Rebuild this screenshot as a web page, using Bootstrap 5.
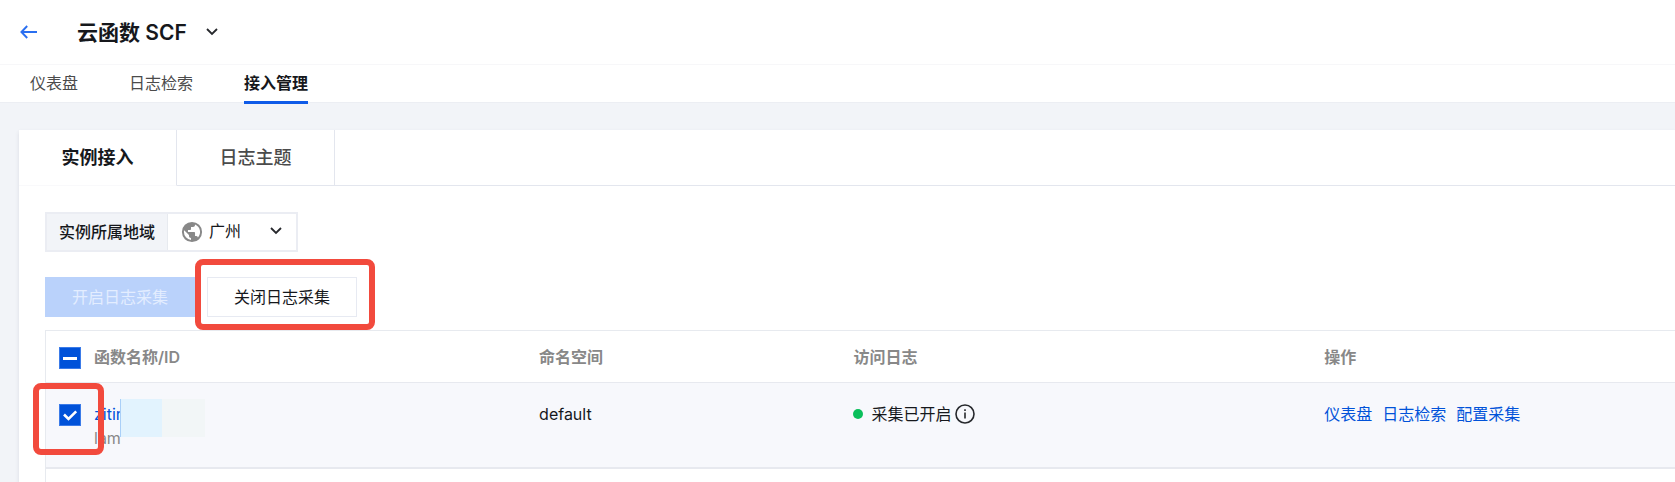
<!DOCTYPE html>
<html lang="zh-CN">
<head>
<meta charset="utf-8">
<meta name="viewport" content="width=device-width, initial-scale=1">
<title>云函数 SCF</title>
<link href="https://cdn.jsdelivr.net/npm/bootstrap@5.3.0/dist/css/bootstrap.min.css" rel="stylesheet">
<style>
  body { font-family: Inter, "Noto Sans CJK SC", sans-serif; font-size: 16px; line-height: 24px; color: #16181c; background: #f2f4f8; }
  a { color: #0052d9; text-decoration: none; }
  .topbar { height: 64px; padding-left: 20px; }
  .topbar h1 { font-size: 21px; line-height: 28px; font-weight: 600; padding-top: 2px; }
  .back-link { width: 57px; line-height: 1; }
  .back-link svg { display: block; }
  .page-tabs { height: 39px; padding-left: 30px; gap: 51px; border-top: 1px solid #f7f7f9; border-bottom: 1px solid #eceef3; }
  .page-tabs a { color: #4b4b4b; height: 39px; line-height: 36px; border-bottom: 3px solid transparent; }
  .page-tabs a.active { color: #16181c; font-weight: 600; border-color: #0f5be8; }
  .main-pane { margin: 27px 0 0 19px; box-shadow: 0 2px 4px rgba(54, 58, 80, .12); }
  .pane-tabs { height: 56px; }
  .pane-tabs a { width: 158px; font-size: 18px; font-weight: 500; color: #4b4b4b; border-right: 1px solid #e3e6ee; border-bottom: 1px solid #e3e6ee; }
  .pane-tabs a.active { color: #16181c; font-weight: 600; border-bottom-color: #f9f9fb; }
  .pane-tabs .rest { border-bottom: 1px solid #e3e6ee; }
  .pane-body { padding: 26px 0 0 26px; }
  .region { height: 40px; border: 2px solid #ebedf3; width: 253px; margin-bottom: 25px; }
  .region label { width: 122px; background: #f2f4f8; border-right: 1px solid #e7eaef; font-weight: 500; }
  .region select { appearance: none; border: 0; background: transparent; color: #16181c; width: 128px; padding: 0 0 2px 41px; }
  .region .globe { left: 13px; top: 7px; pointer-events: none; }
  .region .chev { right: 13px; top: 12px; pointer-events: none; }
  .actions .btn { --bs-btn-border-radius: 0; --bs-btn-padding-x: 0; width: 150px; height: 40px; font-size: 16px; line-height: 24px; }
  .btn-start { --bs-btn-disabled-bg: #bad2fb; --bs-btn-disabled-border-color: #bad2fb; --bs-btn-disabled-color: #e3edff; --bs-btn-disabled-opacity: 1; }
  .btn-stop { --bs-btn-border-color: #e7eaf2; --bs-btn-color: #16181c; --bs-btn-border-width: 1px; background: #fff; }
  .callout { border: 6px solid #f24a3d; border-radius: 8px; pointer-events: none; z-index: 2; }
  .callout-btn { inset: -18px -18px -13px -8px; }
  .callout-check { width: 71px; height: 72px; left: -13px; top: 0; }
  .table-wrap { margin-top: 13px; border-left: 1px solid #e7eaef; border-top: 1px solid #e7eaef; }
  .fn-table { table-layout: fixed; --bs-table-bg: transparent; }
  .fn-table > :not(caption) > * > * { padding: 13px 15px; border-bottom: 1px solid #e7e9ef; color: #16181c; }
  .fn-table > thead > tr > th { color: #888; font-weight: 600; height: 51px; }
  .fn-table > tbody > tr > td { background: #f7f8fc; padding-top: 19px; height: 86px; border-bottom-width: 2px; }
  .fn-table > * > tr > .tick { padding-left: 13px; padding-right: 0; }
  .fn-table > * > tr > .tick + * { padding-left: 13px; }
  .fn-table .form-check-input { width: 22px; height: 22px; margin: 1px 0 0; border-radius: 0; background-size: 20px; display: block; }
  .fn-table .form-check-input:checked, .fn-table .form-check-input:indeterminate { background-color: #0052d9; border-color: #3b7be8; }
  .fn-table .form-check-input:checked { margin-top: 2px; background-image: url("data:image/svg+xml,%3csvg xmlns='http://www.w3.org/2000/svg' viewBox='0 0 20 20'%3e%3cpath fill='none' stroke='%23fff' stroke-width='2.6' d='M4 9.500l4.500 4.500L16.200 6.400'/%3e%3c/svg%3e"); }
  .fn-table .form-check-input:indeterminate { background-image: url("data:image/svg+xml,%3csvg xmlns='http://www.w3.org/2000/svg' viewBox='0 0 20 20'%3e%3cpath fill='none' stroke='%23fff' stroke-width='3' d='M3 10.500h14'/%3e%3c/svg%3e"); }
  .masked { left: 39px; top: 16px; width: 85px; height: 38px; background: linear-gradient(90deg, #a9cff8 1px, #e2f3fe 1px 42px, #f2f6f7 42px); }
  .fn-id { color: #888; }
  .dot { width: 10px; height: 10px; background: #0abf5b; }
  .ops { gap: 10px; }
</style>
</head>
<body class="d-flex flex-column min-vh-100 overflow-hidden">
<header class="bg-white">
  <div class="topbar d-flex align-items-center">
    <a class="back-link" href="#" aria-label="返回"><svg width="18" height="14" viewBox="0 0 18 14" fill="none" stroke="#2a6ff0" stroke-width="1.9"><path d="M17 7H1.800M7.200 1 1.400 7l5.800 6"/></svg></a>
    <h1 class="mb-0">云函数 SCF</h1>
    <button class="btn border-0 p-0 d-flex ms-3" aria-label="切换产品"><svg width="18" height="10" viewBox="0 0 18 10" fill="none" stroke="#26282c" stroke-width="1.800"><path d="m4 2 5 5 5-5"/></svg></button>
  </div>
  <nav class="page-tabs d-flex">
    <a href="#">仪表盘</a>
    <a href="#">日志检索</a>
    <a href="#" class="active" aria-current="page">接入管理</a>
  </nav>
</header>
<main class="main-pane bg-white flex-grow-1 d-flex flex-column">
  <nav class="pane-tabs d-flex">
    <a href="#" class="active d-flex align-items-center justify-content-center" aria-current="page">实例接入</a>
    <a href="#" class="d-flex align-items-center justify-content-center">日志主题</a>
    <div class="rest flex-grow-1"></div>
  </nav>
  <div class="pane-body flex-grow-1 d-flex flex-column">
    <div class="region d-flex">
      <label for="region" class="d-flex align-items-center justify-content-center">实例所属地域</label>
      <div class="position-relative d-flex">
        <svg class="globe position-absolute" width="22" height="22" viewBox="0 0 24 24" fill="#888"><path d="M12 1a11 11 0 1 0 0 22 11 11 0 0 0 0-22zm-1.100 19.730A8.800 8.800 0 0 1 3.200 12c0-.68.090-1.330.23-1.960L8.700 15.300v1.100c0 1.210.99 2.200 2.200 2.200v2.130zm7.590-2.800a2.190 2.190 0 0 0-2.090-1.530h-1.100v-3.300c0-.6-.5-1.100-1.100-1.100H7.600V9.800h2.200c.6 0 1.100-.5 1.100-1.100V6.500h2.200c1.210 0 2.200-.99 2.200-2.200v-.45a8.790 8.790 0 0 1 3.190 14.080z"/></svg>
        <select id="region"><option>广州</option></select>
        <svg class="chev position-absolute" width="14" height="10" viewBox="0 0 14 10" fill="none" stroke="#26282c" stroke-width="1.800"><path d="m2 2 5 5 5-5"/></svg>
      </div>
    </div>
    <div class="actions d-flex">
      <button class="btn btn-start" disabled>开启日志采集</button>
      <div class="position-relative ms-2 ps-1">
        <button class="btn btn-stop">关闭日志采集</button>
        <span class="callout callout-btn position-absolute"></span>
      </div>
    </div>
    <div class="table-wrap flex-grow-1">
      <table class="fn-table table mb-0">
        <colgroup><col style="width:35px"><col style="width:27.2%"><col style="width:19.3%"><col style="width:28.9%"><col></colgroup>
        <thead>
          <tr>
            <th class="tick"><input class="form-check-input" type="checkbox" id="all" aria-label="全选"></th>
            <th>函数名称/ID</th><th>命名空间</th><th>访问日志</th><th>操作</th>
          </tr>
        </thead>
        <tbody>
          <tr>
            <td class="tick position-relative"><input class="form-check-input" type="checkbox" checked aria-label="选择函数"><span class="callout callout-check position-absolute"></span></td>
            <td class="position-relative"><a href="#">zitir</a><div class="fn-id">lam</div><span class="masked position-absolute"></span></td>
            <td>default</td>
            <td><div class="d-flex align-items-center"><span class="dot rounded-circle me-2"></span>采集已开启<svg class="ms-1" width="20" height="20" viewBox="0 0 20 20" fill="none" stroke="#26282c" stroke-width="1.600"><circle cx="10" cy="10" r="9"/><path d="M10 8.500v6M10 5.200v1.800"/></svg></div></td>
            <td><div class="ops d-flex"><a href="#">仪表盘</a><a href="#">日志检索</a><a href="#">配置采集</a></div></td>
          </tr>
        </tbody>
      </table>
    </div>
  </div>
</main>
<script src="https://cdn.jsdelivr.net/npm/bootstrap@5.3.0/dist/js/bootstrap.bundle.min.js"></script>
<script>document.getElementById('all').indeterminate = true;</script>
</body>
</html>
